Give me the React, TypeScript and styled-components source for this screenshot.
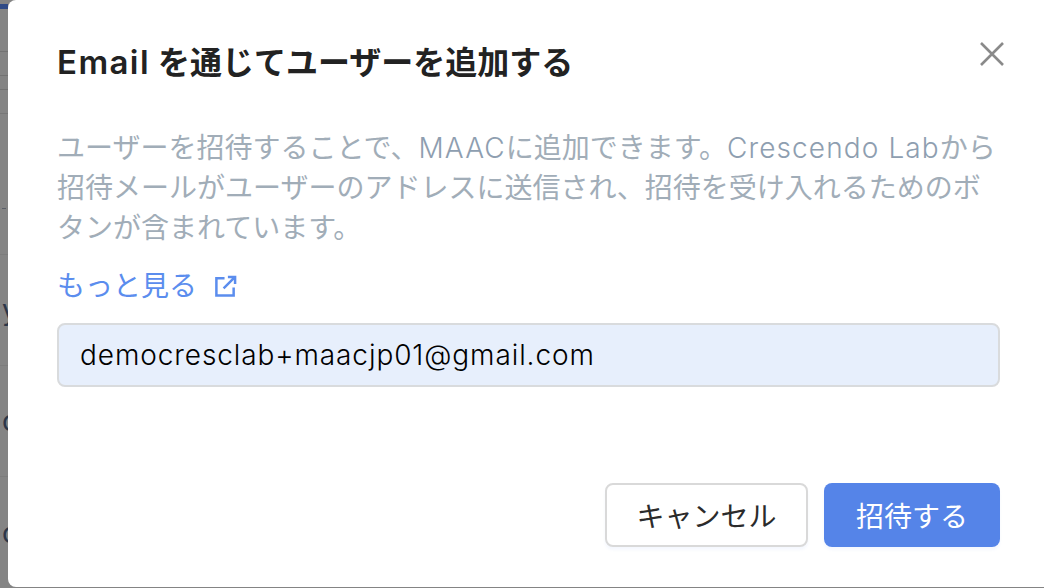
import styled, { createGlobalStyle } from 'styled-components';

const GlobalStyle = createGlobalStyle`
    html, body {
        margin: 0;
        height: 100%;
        overflow: hidden;
        background: #808080;
        font-family: 'Inter', 'Noto Sans CJK JP', sans-serif;
    }
`

const SPage = styled.div`
    position: relative;
    width: 1044px;
    height: 588px;
    overflow: hidden;
    background: #848484;
`

const SBackdrop = styled.div`
    display: flex;
    flex-direction: column;
    width: 8px;
    height: 100%;
    overflow: hidden;
`

const SBackdropRow = styled.div<{ $h: number; $line?: string; $bg?: string }>`
    height: ${(p) => p.$h}px;
    flex-shrink: 0;
    box-sizing: border-box;
    display: flex;
    align-items: center;
    padding-left: 2px;
    border-bottom: ${(p) => (p.$line ? `1px solid ${p.$line}` : '0')};
    background: ${(p) => p.$bg ?? 'transparent'};
    font-size: 28px;
    line-height: 1;
    color: #2c3648;
`

const SBackdropDash = styled.div`
    width: 4px;
    height: 2px;
    margin-left: 2px;
    background: #5a5f68;
`

const SModal = styled.section`
    position: absolute;
    top: 0;
    left: 8px;
    width: 1060px;
    height: 587px;
    box-sizing: border-box;
    padding: 40px 0 40px 49px;
    background: #fff;
    border-radius: 8px;
    display: flex;
    flex-direction: column;
`

const SContent = styled.div`
    width: 943px;
    display: flex;
    flex-direction: column;
    flex: 1;
`

const STitle = styled.h1`
    margin: 0;
    font-size: 32px;
    line-height: 44px;
    font-weight: 600;
    color: #222;
`

const STitleLatin = styled.span`
    font-size: 33px;
    font-weight: 600;
    letter-spacing: 1.4px;
`

const SBodyLatin = styled.span`
    font-weight: 300;
    letter-spacing: 1.1px;
    color: #8e9eb0;
`

const SClose = styled.button`
    position: absolute;
    top: 39px;
    left: 967px;
    width: 34px;
    height: 30px;
    padding: 0;
    border: 0;
    background: none;
    display: flex;
    align-items: center;
    justify-content: center;
`

const SDescription = styled.p`
    margin: 43px 0 0;
    font-size: 28px;
    line-height: 40px;
    color: #a1adb8;
`

const SMore = styled.a`
    margin-top: 18px;
    display: flex;
    align-items: center;
    gap: 17px;
    font-size: 28px;
    line-height: 40px;
    color: #5b8dee;
`

const SInput = styled.div`
    margin-top: 17px;
    height: 64px;
    box-sizing: border-box;
    padding: 0 21px;
    display: flex;
    align-items: center;
    background: #e7effc;
    border: 2px solid #d9dbdd;
    border-radius: 8px;
    font-size: 28px;
    font-weight: 300;
    letter-spacing: 0.9px;
    color: #000;
`

const SActions = styled.div`
    margin-top: auto;
    display: flex;
    justify-content: flex-end;
    gap: 16px;
`

const SButton = styled.button<{ $primary?: boolean }>`
    height: 64px;
    width: ${(p) => (p.$primary ? '176px' : '203px')};
    box-sizing: border-box;
    border-radius: 8px;
    border: ${(p) => (p.$primary ? '0' : '2px solid #d9d9d9')};
    background: ${(p) => (p.$primary ? '#5584e8' : '#fff')};
    color: ${(p) => (p.$primary ? '#fff' : '#2b2b2b')};
    box-shadow: 0 3px 3px rgba(90, 140, 240, 0.06);
    font-family: inherit;
    font-size: 28px;
    font-weight: 400;
    padding: 0;
`

export default function App() {
    return (
        <SPage>
            <GlobalStyle />
            <SBackdrop>
                <SBackdropRow $h={4} />
                <SBackdropRow $h={5} $bg="#2f4a86" />
                <SBackdropRow $h={43} $line="#737373" />
                <SBackdropRow $h={24} $line="#737373" />
                <SBackdropRow $h={14} $line="#737373" />
                <SBackdropRow $h={24} $line="#777" />
                <SBackdropRow $h={94} />
                <SBackdropDash />
                <SBackdropRow $h={46} $line="#7c7c7c" />
                <SBackdropRow $h={111} $line="#7c7c7c">y</SBackdropRow>
                <SBackdropRow $h={111} $line="#7c7c7c">c</SBackdropRow>
                <SBackdropRow $h={111}>c</SBackdropRow>
            </SBackdrop>
            <SModal>
                <SContent>
                    <STitle><STitleLatin>Email</STitleLatin> を通じてユーザーを追加する</STitle>
                    <SClose aria-label="close">
                        <svg width="28" height="28" viewBox="0 0 28 28" fill="none" stroke="#8a8a8a" strokeWidth="2.6">
                            <path d="M3 3L25 25M25 3L3 25" />
                        </svg>
                    </SClose>
                    <SDescription>
                        ユーザーを招待することで、<SBodyLatin>MAAC</SBodyLatin>に追加できます。<SBodyLatin>Crescendo Lab</SBodyLatin>から招待メールがユーザーのアドレスに送信され、招待を受け入れるためのボタンが含まれています。
                    </SDescription>
                    <SMore>
                        もっと見る
                        <svg width="23" height="23" viewBox="0 0 24 24" fill="none" stroke="#5b8dee" strokeWidth="2.6">
                            <path d="M11 3.5H2.5V21.5H20.5V13" />
                            <path d="M10 14L22 2M14.5 2H22V9.5" />
                        </svg>
                    </SMore>
                    <SInput>democresclab+maacjp01@gmail.com</SInput>
                    <SActions>
                        <SButton>キャンセル</SButton>
                        <SButton $primary>招待する</SButton>
                    </SActions>
                </SContent>
            </SModal>
        </SPage>
    )
}
